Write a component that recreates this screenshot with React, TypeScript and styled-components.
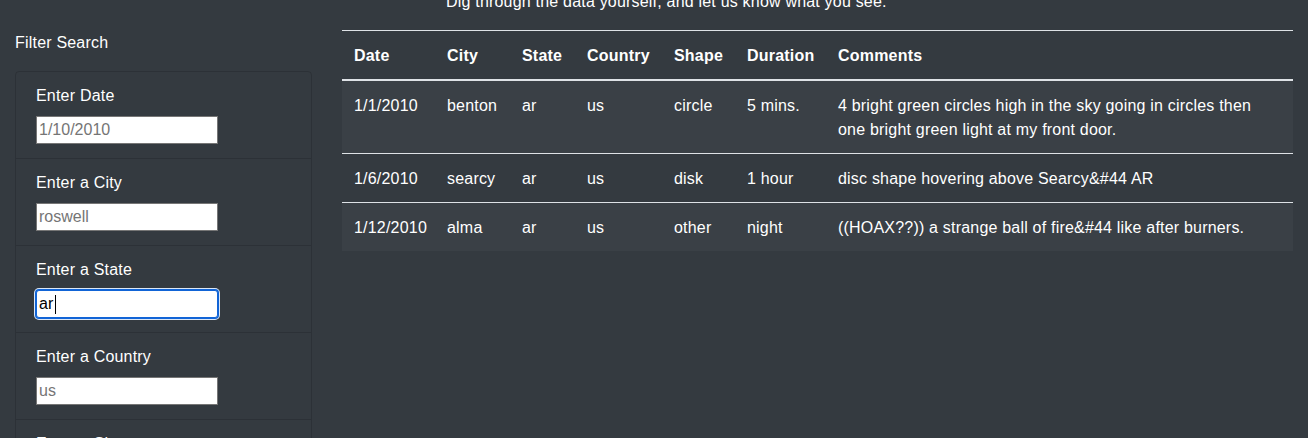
import { useState } from 'react';
import styled, { createGlobalStyle } from 'styled-components';

const COLOR = {
  BG: '#343a40',
  TEXT: '#ffffff',
  LINE: '#dee2e6',
  ITEM_BORDER: 'rgba(0, 0, 0, 0.14)',
  STRIPE: 'rgba(255, 255, 255, 0.03)',
  PLACEHOLDER: '#757575',
  FOCUS: '#1164d6',
};

const GlobalStyle = createGlobalStyle`
  html, body {
    margin: 0;
    padding: 0;
    overflow: hidden;
    background-color: ${COLOR.BG};
  }
  body {
    font-family: 'Liberation Sans', Arial, sans-serif;
    font-size: 16px;
    line-height: 24px;
    letter-spacing: 0.2px;
    color: ${COLOR.TEXT};
  }
  * {
    box-sizing: border-box;
  }
`;

const FILTERS = [
  { id: 'datetime', label: 'Enter Date', placeholder: '1/10/2010', value: '' },
  { id: 'city', label: 'Enter a City', placeholder: 'roswell', value: '' },
  { id: 'state', label: 'Enter a State', placeholder: 'ca', value: 'ar' },
  { id: 'country', label: 'Enter a Country', placeholder: 'us', value: '' },
  { id: 'shape', label: 'Enter a Shape', placeholder: 'circle', value: '' },
];

const SIGHTINGS = [
  {
    date: '1/1/2010',
    city: 'benton',
    state: 'ar',
    country: 'us',
    shape: 'circle',
    duration: '5 mins.',
    comments: '4 bright green circles high in the sky going in circles then one bright green light at my front door.',
  },
  {
    date: '1/6/2010',
    city: 'searcy',
    state: 'ar',
    country: 'us',
    shape: 'disk',
    duration: '1 hour',
    comments: 'disc shape hovering above Searcy&#44 AR',
  },
  {
    date: '1/12/2010',
    city: 'alma',
    state: 'ar',
    country: 'us',
    shape: 'other',
    duration: 'night',
    comments: '((HOAX??)) a strange ball of fire&#44 like after burners.',
  },
];

const COLUMNS = [
  { key: 'date', name: 'Date', width: 93 },
  { key: 'city', name: 'City', width: 75 },
  { key: 'state', name: 'State', width: 65 },
  { key: 'country', name: 'Country', width: 87 },
  { key: 'shape', name: 'Shape', width: 73 },
  { key: 'duration', name: 'Duration', width: 91 },
  { key: 'comments', name: 'Comments', width: 0 },
] as const;

function FilterItem({ id, label, placeholder, value }: (typeof FILTERS)[number]) {
  const [inputText, setInputText] = useState(value);
  const focused = id === 'state';

  return (
    <Item>
      <label htmlFor={id}>{label}</label>
      <InputWrap>
        <Input
          id={id}
          type="text"
          isFocused={focused}
          placeholder={placeholder}
          value={inputText}
          onChange={({ target }) => setInputText(target.value)}
        />
        {focused && <Caret style={{ left: `${4 + inputText.length * 7.4}px` }} />}
      </InputWrap>
    </Item>
  );
}

function App() {
  return (
    <>
      <GlobalStyle />
      <Row>
        <Sidebar>
          <Title>Filter Search</Title>
          <ListGroup>
            {FILTERS.map((filter) => (
              <FilterItem key={filter.id} {...filter} />
            ))}
          </ListGroup>
        </Sidebar>

        <Main>
          <Intro>Dig through the data yourself, and let us know what you see.</Intro>
          <Table>
            <colgroup>
              {COLUMNS.map((col) => (
                <col key={col.key} style={col.width ? { width: `${col.width}px` } : undefined} />
              ))}
            </colgroup>
            <thead>
              <tr>
                {COLUMNS.map((col) => (
                  <th key={col.key}>{col.name}</th>
                ))}
              </tr>
            </thead>
            <tbody>
              {SIGHTINGS.map((row) => (
                <tr key={row.date}>
                  {COLUMNS.map((col) => (
                    <td key={col.key}>{row[col.key]}</td>
                  ))}
                </tr>
              ))}
            </tbody>
          </Table>
        </Main>
      </Row>
    </>
  );
}

export default App;

const Row = styled.div`
  display: grid;
  grid-template-columns: 327px 1fr;
  margin-top: -10px;
`;

const Sidebar = styled.aside`
  padding: 41px 15px 0 15px;
`;

const Title = styled.div`
  margin-bottom: 16px;
`;

const ListGroup = styled.div`
  border: 1px solid ${COLOR.ITEM_BORDER};
  border-radius: 4px;
`;

const Item = styled.div`
  padding: 12px 20px;
  border-top: 1px solid ${COLOR.ITEM_BORDER};

  &:first-child {
    border-top: none;
  }

  label {
    display: block;
    margin-bottom: 8px;
  }
`;

const InputWrap = styled.div`
  position: relative;
  width: 182px;
  height: 30px;
`;

const Input = styled.input<{ isFocused: boolean }>`
  display: block;
  width: 182px;
  height: 28px;
  padding: 1px 2px;
  font-family: 'Liberation Sans', Arial, sans-serif;
  font-size: 16px;
  color: #000;
  background-color: #fff;
  border: 1px solid ${({ isFocused }) => (isFocused ? COLOR.FOCUS : '#767676')};
  border-radius: ${({ isFocused }) => (isFocused ? '3px' : '0')};
  box-shadow: ${({ isFocused }) => (isFocused ? `0 0 0 1px ${COLOR.FOCUS}, 0 0 0 2px #dbe7f7` : 'none')};
  outline: none;

  &::placeholder {
    color: ${COLOR.PLACEHOLDER};
  }
`;

const Caret = styled.span`
  position: absolute;
  top: 5px;
  width: 1px;
  height: 19px;
  background-color: #000;
`;

const Main = styled.main`
  padding: 0 15px;
`;

const Intro = styled.p`
  margin: 0 0 16px 0;
  padding-left: 104px;
`;

const Table = styled.table`
  width: 951px;
  table-layout: fixed;
  border-collapse: collapse;
  color: ${COLOR.TEXT};

  th,
  td {
    padding: 13px 12px 11px;
    text-align: left;
    vertical-align: top;
    border-top: 1px solid ${COLOR.LINE};
  }

  th {
    font-weight: bold;
    border-bottom: 2px solid ${COLOR.LINE};
  }

  tbody tr:nth-child(odd) {
    background-color: ${COLOR.STRIPE};
  }

  tbody tr:first-child td {
    border-top: none;
  }
`;
